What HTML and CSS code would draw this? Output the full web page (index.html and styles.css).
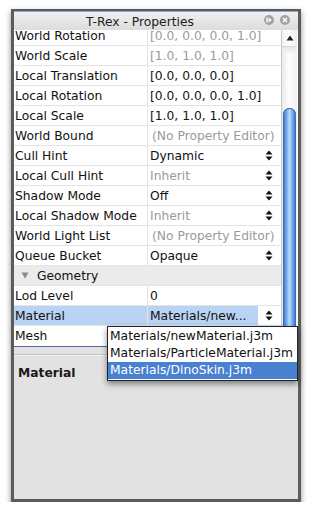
FILE: index.html
```html
<!DOCTYPE html>
<html>
<head>
<meta charset="utf-8">
<link rel="stylesheet" href="styles.css">
</head>
<body>
<div class="window">
  <div class="titlebar">
    <div class="title">T-Rex - Properties</div>
    <div class="tbtns">
      <span class="tb"><svg width="10" height="10" viewBox="0 0 10 10"><rect x="2.3" y="2.5" width="1.4" height="5" fill="#fff"/><path d="M4.6 2.5 L7.8 5 L4.6 7.5 Z" fill="#fff"/></svg></span>
      <span class="tb"><svg width="10" height="10" viewBox="0 0 10 10"><path d="M3 3 L7 7 M7 3 L3 7" stroke="#fff" stroke-width="1.5"/></svg></span>
    </div>
  </div>
  <div class="sheet">
    <div class="list">
      <div class="rows">
        <div class="row"><div class="name">World Rotation</div><div class="value"><span class="vt dim">[0.0, 0.0, 0.0, 1.0]</span></div></div>
        <div class="row"><div class="name">World Scale</div><div class="value"><span class="vt dim">[1.0, 1.0, 1.0]</span></div></div>
        <div class="row"><div class="name">Local Translation</div><div class="value"><span class="vt">[0.0, 0.0, 0.0]</span></div></div>
        <div class="row"><div class="name">Local Rotation</div><div class="value"><span class="vt">[0.0, 0.0, 0.0, 1.0]</span></div></div>
        <div class="row"><div class="name">Local Scale</div><div class="value"><span class="vt">[1.0, 1.0, 1.0]</span></div></div>
        <div class="row"><div class="name">World Bound</div><div class="value"><span class="vt dim np">(No Property Editor)</span></div></div>
        <div class="row"><div class="name">Cull Hint</div><div class="value"><span class="vt">Dynamic</span><span class="spin"><svg width="8" height="11" viewBox="0 0 8 11"><path d="M0.5 4.5 L4 0.5 L7.5 4.5 Z M0.5 6.5 L4 10.5 L7.5 6.5 Z" fill="#111"/></svg></span></div></div>
        <div class="row"><div class="name">Local Cull Hint</div><div class="value"><span class="vt dim">Inherit</span><span class="spin"><svg width="8" height="11" viewBox="0 0 8 11"><path d="M0.5 4.5 L4 0.5 L7.5 4.5 Z M0.5 6.5 L4 10.5 L7.5 6.5 Z" fill="#111"/></svg></span></div></div>
        <div class="row"><div class="name">Shadow Mode</div><div class="value"><span class="vt">Off</span><span class="spin"><svg width="8" height="11" viewBox="0 0 8 11"><path d="M0.5 4.5 L4 0.5 L7.5 4.5 Z M0.5 6.5 L4 10.5 L7.5 6.5 Z" fill="#111"/></svg></span></div></div>
        <div class="row"><div class="name">Local Shadow Mode</div><div class="value"><span class="vt dim">Inherit</span><span class="spin"><svg width="8" height="11" viewBox="0 0 8 11"><path d="M0.5 4.5 L4 0.5 L7.5 4.5 Z M0.5 6.5 L4 10.5 L7.5 6.5 Z" fill="#111"/></svg></span></div></div>
        <div class="row"><div class="name">World Light List</div><div class="value"><span class="vt dim np">(No Property Editor)</span></div></div>
        <div class="row"><div class="name">Queue Bucket</div><div class="value"><span class="vt">Opaque</span><span class="spin"><svg width="8" height="11" viewBox="0 0 8 11"><path d="M0.5 4.5 L4 0.5 L7.5 4.5 Z M0.5 6.5 L4 10.5 L7.5 6.5 Z" fill="#111"/></svg></span></div></div>
        <div class="row cat"><svg class="caret" width="8" height="7" viewBox="0 0 8 7"><path d="M0.5 0.5 L7.5 0.5 L4 6.5 Z" fill="#8a8a8a"/></svg><span>Geometry</span></div>
        <div class="row"><div class="name">Lod Level</div><div class="value"><span class="vt">0</span></div></div>
        <div class="row sel"><div class="name">Material</div><div class="value"><span class="vt">Materials/new...</span><span class="spin"><svg width="8" height="11" viewBox="0 0 8 11"><path d="M0.5 4.5 L4 0.5 L7.5 4.5 Z M0.5 6.5 L4 10.5 L7.5 6.5 Z" fill="#111"/></svg></span></div></div>
        <div class="row last"><div class="name">Mesh</div><div class="value"><span class="vt"></span></div></div>
      </div>
    </div>
    <div class="scrollbar">
      <div class="sb-up"><svg width="8" height="6" viewBox="0 0 8 6"><path d="M0.5 5.5 L4 0.5 L7.5 5.5 Z" fill="#222"/></svg></div>
      <div class="sb-track"><div class="sb-cap"></div><div class="sb-thumb"></div></div>
    </div>
  </div>
  <div class="desc">
    <div class="desc-inner"><div class="desc-title">Material</div></div>
  </div>
  <div class="popup">
    <div class="item">Materials/newMaterial.j3m</div>
    <div class="item">Materials/ParticleMaterial.j3m</div>
    <div class="item on">Materials/DinoSkin.j3m</div>
  </div>
</div>
</body>
</html>
```
FILE: styles.css
```css
html, body {
  margin: 0;
  padding: 0;
  background: #fff;
}
body {
  font-family: "DejaVu Sans", "Liberation Sans", sans-serif;
  font-size: 12.3px;
  color: #111;
}
.window {
  position: relative;
  margin: 9px 0 0 11px;
  width: 284px;
  height: 488px;
  border: 3px solid #5c5c5c;
  border-top-width: 2px;
  border-bottom-width: 3px;
  background: #e2e2e2;
  box-shadow: 0 3px 6px rgba(0,0,0,0.45);
  display: flex;
  flex-direction: column;
}
.titlebar {
  height: 18px;
  border-top: 1px solid #8ea8d2;
  background: linear-gradient(#f0f0f0, #dcdcdc);
  display: flex;
  align-items: center;
  flex: none;
}
.title {
  flex: 1;
  text-align: center;
  color: #222;
  padding-left: 4px;
  padding-top: 2px;
}
.tbtns {
  display: flex;
  gap: 6px;
  padding-right: 8px;
  padding-left: 2px;
  margin-top: -2px;
}
.tb {
  width: 10px;
  height: 10px;
  border-radius: 50%;
  background: #a2a2a2;
  display: flex;
}
.sheet {
  display: flex;
  height: 316px;
  border-bottom: 1px solid #55659f;
  background: #fff;
  flex: none;
}
.list {
  width: 267px;
  overflow: hidden;
}
.rows {
  margin-top: -4px;
}
.row {
  height: 20px;
  box-sizing: border-box;
  border-bottom: 1px solid #e4e4e4;
  display: flex;
  align-items: stretch;
  white-space: nowrap;
}
.row.last {
  border-bottom: none;
}
.name {
  width: 133px;
  padding-left: 1px;
  box-sizing: border-box;
  display: flex;
  align-items: center;
  overflow: hidden;
}
.value {
  flex: 1;
  border-left: 1px solid #e4e4e4;
  display: flex;
  align-items: stretch;
}
.vt {
  flex: 1;
  padding-left: 2px;
  display: flex;
  align-items: center;
}
.vt.np {
  padding-left: 4px;
}
.dim {
  color: #9a9a9a;
}
.spin {
  width: 23px;
  padding-left: 7px;
  box-sizing: border-box;
  display: flex;
  align-items: center;
  background: #fff;
}
.row.sel .name,
.row.sel .vt {
  background: #b9d3f4;
}
.row.cat {
  background: #ebebeb;
  align-items: center;
  padding-left: 7px;
}
.caret {
  margin-right: 8px;
}
.scrollbar {
  width: 16px;
  border-left: 1px solid #c9c9c9;
  box-sizing: border-box;
  display: flex;
  flex-direction: column;
  background: linear-gradient(90deg, #e9e9e9, #fdfdfd 45%, #f0f0f0);
}
.sb-up {
  height: 16px;
  display: flex;
  align-items: center;
  justify-content: center;
  border-bottom: 1px solid #dadada;
  background: linear-gradient(90deg, #f2f2f2, #ffffff 50%, #efefef);
}
.sb-track {
  flex: 1;
  display: flex;
  flex-direction: column;
}
.sb-cap {
  height: 6px;
  margin: 0 1px;
  border-radius: 0 0 6px 6px;
  background: linear-gradient(#e6e6e6, #f4f4f4);
}
.sb-thumb {
  margin: 55px 1px 0 1px;
  flex: 1;
  border-radius: 7px 7px 0 0;
  background: linear-gradient(90deg, #3563bb, #6fa6e6 25%, #b8dcfb 50%, #6fa6e6 75%, #3563bb);
  box-shadow: inset 0 1px 0 #2f5aa8;
}
.desc {
  flex: 1;
  padding-top: 7px;
  background: #e2e2e2;
}
.desc-inner {
  border-top: 1px solid #c6c6c6;
  box-shadow: inset 0 1px 0 #f2f2f2;
  padding: 8px 0 0 4px;
}
.desc-title {
  font-weight: bold;
  line-height: 20px;
  color: #1a1a1a;
}
.popup {
  position: absolute;
  left: 93px;
  top: 315px;
  width: 189px;
  padding: 1px 0;
  border: 1px solid #1c2230;
  background: #fff;
  box-shadow: 0 3px 6px rgba(0,0,0,0.45);
}
.item {
  height: 17px;
  line-height: 17px;
  padding-left: 2px;
  white-space: nowrap;
  overflow: hidden;
}
.item.on {
  background: #4a80d0;
  color: #fff;
}
```
